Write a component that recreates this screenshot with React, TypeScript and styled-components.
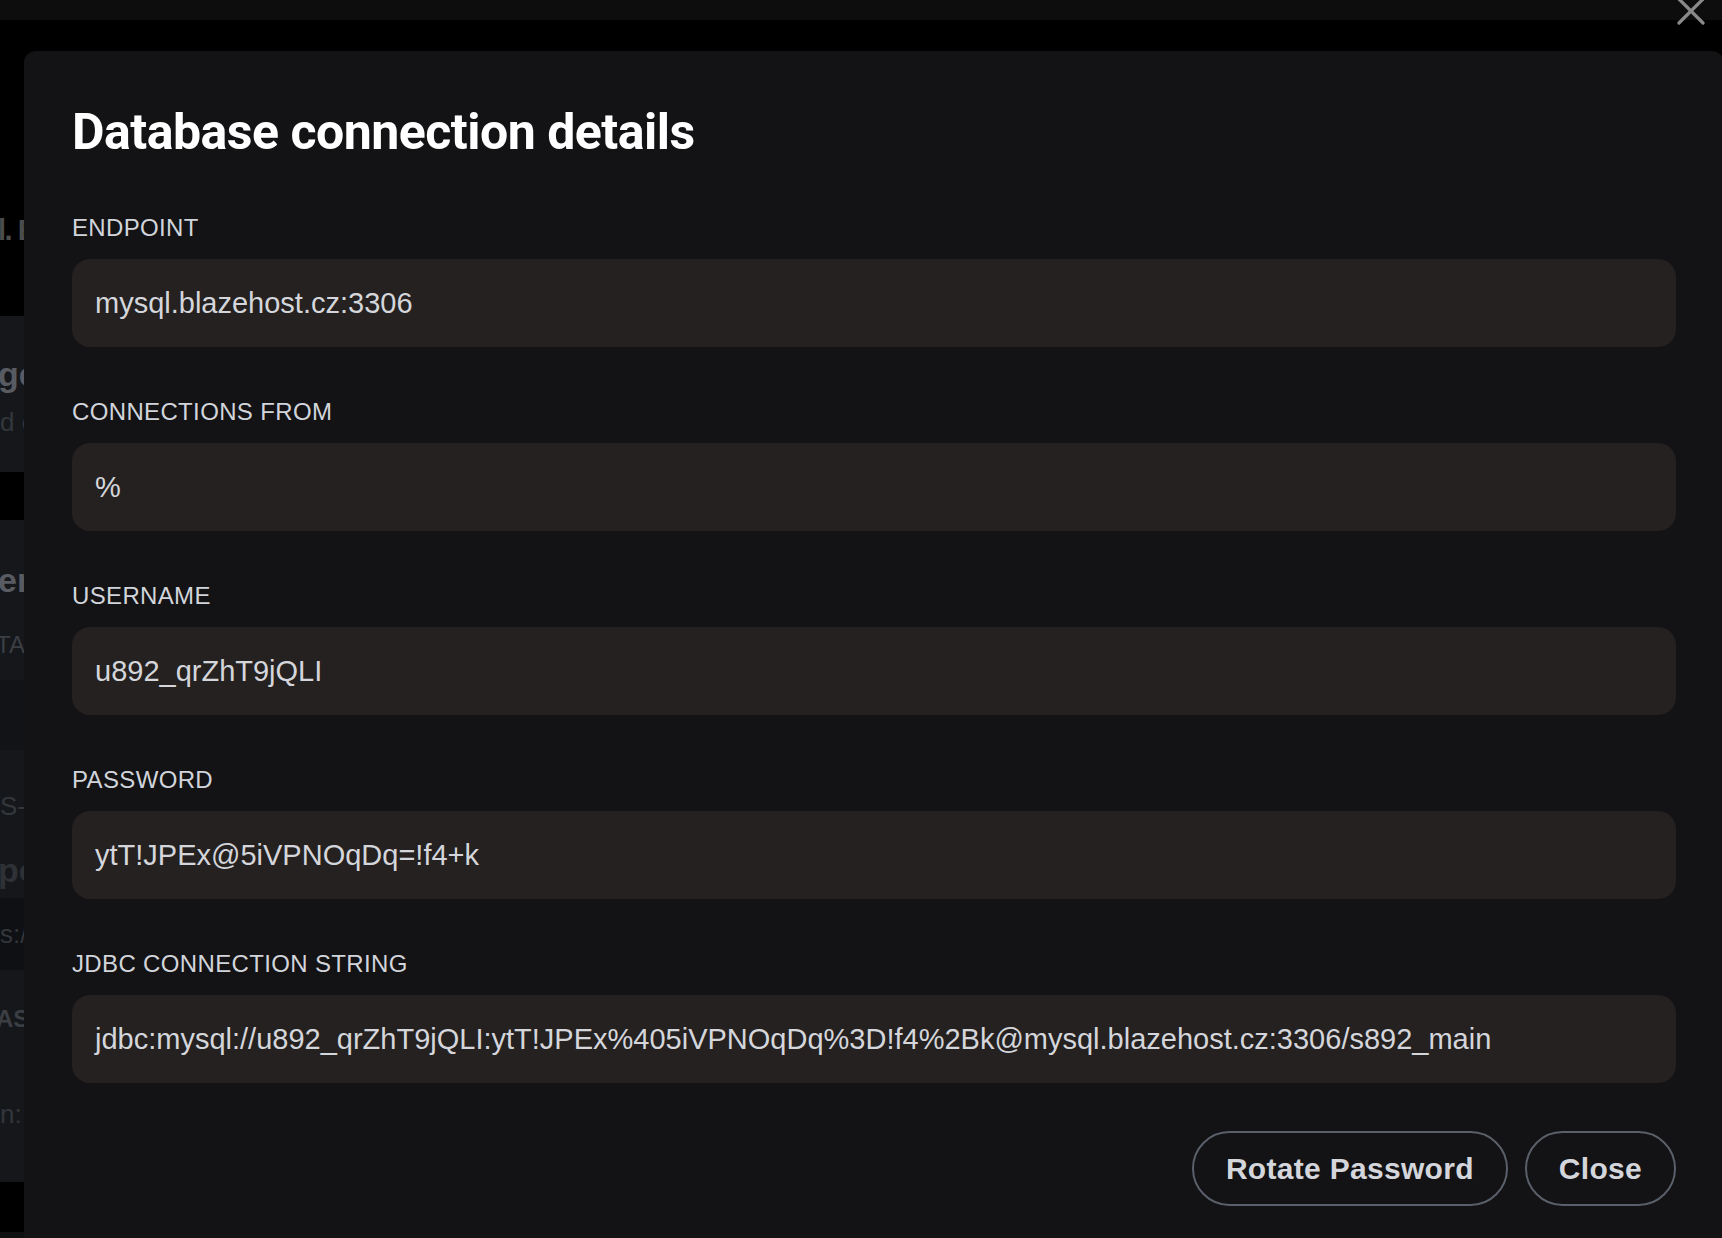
import React from "react";
import styled, { createGlobalStyle } from "styled-components";

interface Field {
  label: string;
  value: string;
}

const fields: Field[] = [
  { label: "ENDPOINT", value: "mysql.blazehost.cz:3306" },
  { label: "CONNECTIONS FROM", value: "%" },
  { label: "USERNAME", value: "u892_qrZhT9jQLI" },
  { label: "PASSWORD", value: "ytT!JPEx@5iVPNOqDq=!f4+k" },
  {
    label: "JDBC CONNECTION STRING",
    value:
      "jdbc:mysql://u892_qrZhT9jQLI:ytT!JPEx%405iVPNOqDq%3D!f4%2Bk@mysql.blazehost.cz:3306/s892_main",
  },
];

const GlobalStyle = createGlobalStyle`
  html, body {
    margin: 0;
    padding: 0;
    background: #000;
    overflow: hidden;
  }
  * {
    box-sizing: border-box;
  }
`;

const App: React.FC = () => {
  return (
    <>
      <GlobalStyle />
      <Page>
        {/* dimmed page behind the dialog */}
        <TopBar />
        <BgColumn>
          <BgHeading>l. Edit</BgHeading>
          <BgCard $pb={34}>
            <BgTitle $mt={38}>ge access</BgTitle>
            <BgText>d connections</BgText>
          </BgCard>
          <BgCard $mt={48} $pb={52}>
            <BgTitle $mt={40}>erver</BgTitle>
            <BgCaps $mt={30}>TAILS</BgCaps>
            <BgStripe />
            <BgText $mt={40}>S-1</BgText>
            <BgTitle $mt={28} $muted>pool</BgTitle>
            <BgBand>
              <BgText>s://</BgText>
            </BgBand>
            <BgCaps $bold $mt={34}>AS</BgCaps>
            <BgText $mt={64}>n:</BgText>
          </BgCard>
        </BgColumn>
        <BgFooterLine />

        <CloseIcon viewBox="0 0 28 28" aria-label="close">
          <line x1="2" y1="2" x2="26" y2="26" />
          <line x1="26" y1="2" x2="2" y2="26" />
        </CloseIcon>

        <Dialog>
          <Title>Database connection details</Title>
          <FieldList>
            {fields.map((f) => (
              <FieldBlock key={f.label}>
                <Label>{f.label}</Label>
                <ValueBox>{f.value}</ValueBox>
              </FieldBlock>
            ))}
          </FieldList>
          <Actions>
            <PillButton>Rotate Password</PillButton>
            <PillButton>Close</PillButton>
          </Actions>
        </Dialog>
      </Page>
    </>
  );
};
export default App;

const Page = styled.div`
  position: relative;
  width: 100vw;
  height: 100vh;
  overflow: hidden;
  background: #000;
  font-family: "Liberation Sans", Arial, sans-serif;
`;

const TopBar = styled.div`
  height: 20px;
  background: #0d0d0e;
`;

const BgColumn = styled.div`
  display: flex;
  flex-direction: column;
  width: 600px;
  padding-top: 196px;
`;

const BgHeading = styled.div`
  height: 28px;
  line-height: 28px;
  margin-left: -2px;
  font-size: 29px;
  font-weight: 700;
  letter-spacing: -1.5px;
  color: #4c4c4c;
  white-space: nowrap;
`;

const BgCard = styled.div<{ $mt?: number; $pb: number }>`
  display: flex;
  flex-direction: column;
  margin-top: ${(p) => p.$mt ?? 72}px;
  padding-bottom: ${(p) => p.$pb}px;
  background: #15171b;
  white-space: nowrap;
`;

const BgTitle = styled.div<{ $mt?: number; $muted?: boolean }>`
  margin-top: ${(p) => p.$mt ?? 30}px;
  margin-left: -2px;
  font-size: 34px;
  font-weight: 700;
  line-height: 40px;
  color: ${(p) => (p.$muted ? "#2e3136" : "#585b61")};
`;

const BgText = styled.div<{ $mt?: number }>`
  margin-top: ${(p) => p.$mt ?? 12}px;
  font-size: 26px;
  line-height: 32px;
  color: #33363b;
`;

const BgCaps = styled.div<{ $mt?: number; $bold?: boolean }>`
  margin-top: ${(p) => p.$mt ?? 10}px;
  margin-left: -4px;
  font-size: 24px;
  line-height: 30px;
  font-weight: ${(p) => (p.$bold ? 700 : 400)};
  color: #3b3e43;
`;

const BgStripe = styled.div`
  margin-top: 20px;
  height: 70px;
  background: #111317;
`;

const BgBand = styled.div`
  margin-top: 8px;
  height: 72px;
  display: flex;
  align-items: center;
  background: #0e1013;
  & > div {
    margin-top: 0;
  }
`;

const BgFooterLine = styled.div`
  position: absolute;
  left: 0;
  right: 0;
  bottom: 0;
  height: 6px;
  background: #0f1012;
`;

const CloseIcon = styled.svg`
  position: absolute;
  top: -3px;
  right: 17px;
  width: 28px;
  height: 28px;
  stroke: #8a8a8a;
  stroke-width: 3.2;
  stroke-linecap: round;
`;

const Dialog = styled.div`
  position: absolute;
  left: 24px;
  top: 51px;
  width: 1700px;
  bottom: -40px;
  display: flex;
  flex-direction: column;
  padding: 51px 48px 0;
  background: #131214;
  border-radius: 12px;
`;

const Title = styled.h1`
  margin: 0 0 52px;
  font-family: Roboto, "Liberation Sans", sans-serif;
  font-size: 50px;
  line-height: 60px;
  font-weight: 700;
  color: #ffffff;
  letter-spacing: -0.5px;
`;

const FieldList = styled.div`
  display: flex;
  flex-direction: column;
  gap: 51px;
`;

const FieldBlock = styled.div`
  display: flex;
  flex-direction: column;
`;

const Label = styled.div`
  margin-bottom: 17px;
  font-size: 24px;
  line-height: 28px;
  letter-spacing: 0.35px;
  color: #d1d5db;
`;

const ValueBox = styled.div`
  display: flex;
  align-items: center;
  height: 88px;
  padding: 0 23px;
  border-radius: 18px;
  background: #242120;
  font-size: 29px;
  color: #d4d6db;
  white-space: nowrap;
  overflow: hidden;
`;

const Actions = styled.div`
  display: flex;
  justify-content: flex-end;
  gap: 17px;
  margin-top: 48px;
`;

const PillButton = styled.button`
  height: 75px;
  padding: 0 32px;
  border: 2px solid #59606a;
  border-radius: 999px;
  background: transparent;
  font-family: "Liberation Sans", Arial, sans-serif;
  font-size: 30px;
  font-weight: 700;
  letter-spacing: 0.3px;
  color: #d4d6db;
  cursor: pointer;
`;
